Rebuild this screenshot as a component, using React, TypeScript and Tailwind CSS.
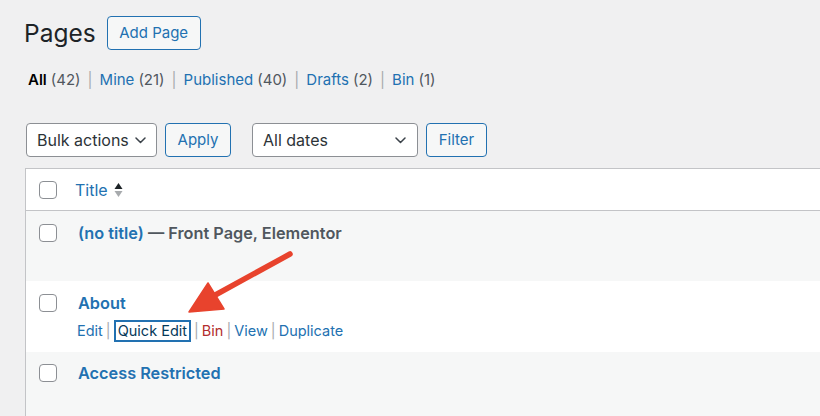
import React from "react"

const font = { fontFamily: "Inter, 'Liberation Sans', sans-serif" }

function Chevron() {
  return (
    <svg width="11" height="7" viewBox="0 0 11 7" className="shrink-0">
      <polyline points="1,1 5.5,5.5 10,1" fill="none" stroke="#3c434a" strokeWidth="1.5" strokeLinecap="round" strokeLinejoin="round" />
    </svg>
  )
}

function Checkbox() {
  return <div className="w-[18px] h-[18px] shrink-0 rounded-[4px] border border-[#8c8f94] bg-white" />
}

function Sep() {
  return <span className="text-[#a7aaad] mx-[3px]">|</span>
}

const filters = [
  { label: "All", count: 42, current: true },
  { label: "Mine", count: 21 },
  { label: "Published", count: 40 },
  { label: "Drafts", count: 2 },
  { label: "Bin", count: 1 },
]

export default function App() {
  return (
    <div className="relative w-[820px] h-[416px] overflow-hidden bg-[#f0f0f1] text-[#3c434a]" style={font}>
      <div className="pl-[25px] pt-[16px]">
        {/* heading */}
        <div className="flex items-center h-[34px]">
          <h1 className="text-[24.5px] leading-none text-[#1d2327] font-normal -ml-[1px]">Pages</h1>
          <button className="ml-[11px] h-[34px] w-[94px] rounded-[4px] border border-[#2271b1] bg-[#f6f7f7] text-[15px] text-[#2271b1]">
            Add Page
          </button>
        </div>

        {/* status links */}
        <div className="mt-[20px] pl-[3px] h-[20px] flex items-center text-[15px] leading-[20px]">
          {filters.map((f, i) => (
            <span key={f.label} className="flex items-center">
              {i > 0 && <span className="text-[#a7aaad] mx-[7px]">|</span>}
              <span className={f.current ? "font-semibold text-[#000]" : "text-[#2271b1]"}>{f.label}</span>
              <span className="ml-[4px] text-[#50575e]">({f.count})</span>
            </span>
          ))}
        </div>

        {/* tablenav */}
        <div className="mt-[33px] flex items-center h-[34px]">
          <div className="ml-[1px] w-[131px] h-[34px] flex items-center justify-between pl-[10px] pr-[10px] rounded-[4px] border border-[#8c8f94] bg-white text-[16px] text-[#2c3338]">
            <span>Bulk actions</span>
            <Chevron />
          </div>
          <button className="ml-[8px] w-[66px] h-[34px] rounded-[4px] border border-[#2271b1] bg-[#f6f7f7] text-[15px] text-[#2271b1]">
            Apply
          </button>
          <div className="ml-[21px] w-[166px] h-[34px] flex items-center justify-between pl-[10px] pr-[11px] rounded-[4px] border border-[#8c8f94] bg-white text-[16px] text-[#2c3338]">
            <span>All dates</span>
            <Chevron />
          </div>
          <button className="ml-[8px] w-[61px] h-[34px] rounded-[4px] border border-[#2271b1] bg-[#f6f7f7] text-[15px] text-[#2271b1]">
            Filter
          </button>
        </div>

        {/* table */}
        <div className="mt-[11px] border-l border-t border-[#c3c4c7] bg-white">
          <div className="h-[42px] flex items-center pl-[13px] border-b border-[#c3c4c7] bg-white">
            <Checkbox />
            <span className="ml-[18px] text-[16px] text-[#2271b1]">Title</span>
            <svg width="9" height="16" viewBox="0 0 9 16" className="ml-[6px]">
              <polygon points="4.5,1 8.5,7 0.5,7" fill="#1d2327" />
              <polygon points="0.5,9 8.5,9 4.5,15" fill="#a7aaad" />
            </svg>
          </div>

          <div className="h-[70px] flex items-start pl-[13px] pt-[13px] bg-[#f6f7f7]">
            <Checkbox />
            <div className="ml-[21px] -mt-[1px] text-[16.3px] leading-[20px] font-semibold">
              <span className="text-[#2271b1]">(no title)</span>
              <span className="text-[#50575e]"> — Front Page, Elementor</span>
            </div>
          </div>

          <div className="h-[71px] flex items-start pl-[13px] pt-[13px] bg-white">
            <Checkbox />
            <div className="ml-[20px] -mt-[1px]">
              <div className="ml-[1px] text-[16.3px] leading-[20px] font-semibold text-[#2271b1]">About</div>
              <div className="mt-[7px] flex items-center text-[14.5px] leading-[20px]">
                <span className="text-[#2271b1]">Edit</span>
                <Sep />
                <span className="px-[2px] h-[22px] flex items-center border-2 border-[#2271b1] text-[#043959]">Quick Edit</span>
                <Sep />
                <span className="text-[#b32d2e]">Bin</span>
                <Sep />
                <span className="text-[#2271b1]">View</span>
                <Sep />
                <span className="text-[#2271b1]">Duplicate</span>
              </div>
            </div>
          </div>

          <div className="h-[80px] flex items-start pl-[13px] pt-[12px] bg-[#f6f7f7]">
            <Checkbox />
            <div className="ml-[21px] -mt-[1px] text-[16.3px] leading-[20px] font-semibold text-[#2271b1]">Access Restricted</div>
          </div>
        </div>
      </div>

      {/* annotation arrow */}
      <svg className="absolute left-0 top-0 pointer-events-none" width="820" height="416" viewBox="0 0 820 416">
        <line x1="290" y1="254" x2="208" y2="299" stroke="#e8432d" strokeWidth="5.5" strokeLinecap="round" />
        <polygon points="189,312 208,283 224,309" fill="#e8432d" stroke="#e8432d" strokeWidth="1.5" strokeLinejoin="round" />
      </svg>
    </div>
  )
}
